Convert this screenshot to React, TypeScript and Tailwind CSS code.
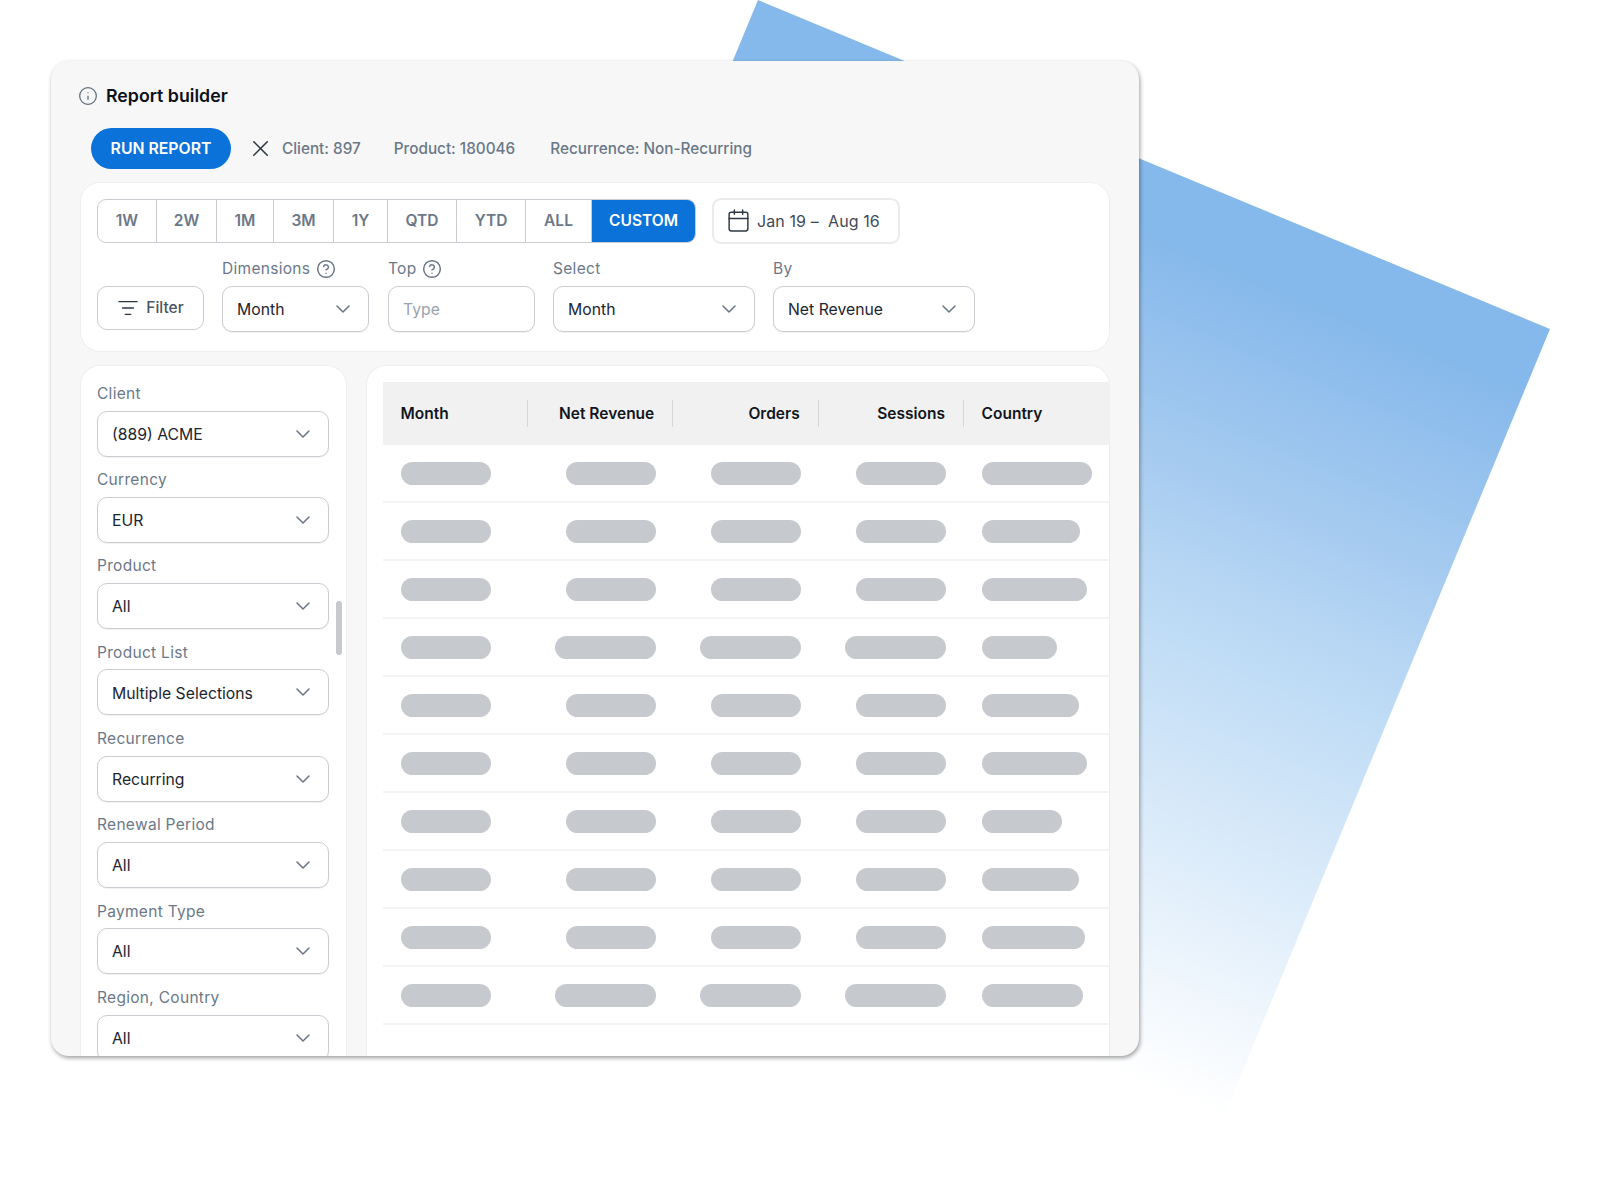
import { Calendar, ChevronDown, CircleHelp, Info, ListFilter, X } from 'lucide-react'

const ranges = [
  { label: '1W', w: 'w-[59px]' },
  { label: '2W', w: 'w-[60px]' },
  { label: '1M', w: 'w-[57px]' },
  { label: '3M', w: 'w-[60px]' },
  { label: '1Y', w: 'w-[54px]' },
  { label: 'QTD', w: 'w-[69px]' },
  { label: 'YTD', w: 'w-[69px]' },
  { label: 'ALL', w: 'w-[66px]' },
]

const fields = [
  { label: 'Client', value: '(889) ACME' },
  { label: 'Currency', value: 'EUR' },
  { label: 'Product', value: 'All' },
  { label: 'Product List', value: 'Multiple Selections' },
  { label: 'Recurrence', value: 'Recurring' },
  { label: 'Renewal Period', value: 'All' },
  { label: 'Payment Type', value: 'All' },
  { label: 'Region, Country', value: 'All' },
]

// widths of the placeholder pills, one row per line: month, revenue, orders, sessions, country
const rows = [
  [90, 90, 90, 90, 110],
  [90, 90, 90, 90, 98],
  [90, 90, 90, 90, 105],
  [90, 101, 101, 101, 75],
  [90, 90, 90, 90, 97],
  [90, 90, 90, 90, 105],
  [90, 90, 90, 90, 80],
  [90, 90, 90, 90, 97],
  [90, 90, 90, 90, 103],
  [90, 101, 101, 101, 101],
]

function SelectBox({ value, className }: { value: string; className: string }) {
  return (
    <div className={`flex items-center justify-between h-[46px] shrink-0 bg-white border border-[#c9ccd1] rounded-[10px] pl-[14px] pr-[13px] shadow-[0_1px_1px_rgba(0,0,0,0.06)] text-[15.75px] text-[#1d2530] ${className}`}>
      <span className="pt-[2px]">{value}</span>
      <ChevronDown size={24} strokeWidth={1.5} className="text-[#667486]" />
    </div>
  )
}

function Label({ text, help }: { text: string; help?: boolean }) {
  return (
    <div className="flex items-center gap-[6px] h-[22px] text-[15.5px] text-[#6b7888] tracking-[0.3px]">
      {text}
      {help && <CircleHelp size={20} strokeWidth={1.75} className="text-[#667486]" />}
    </div>
  )
}

function Pill({ w }: { w: number }) {
  return <div className="h-[23px] rounded-full bg-[#c6c9ce]" style={{ width: w }} />
}

export default function App() {
  return (
    <div className="relative w-[1600px] h-[1200px] overflow-hidden bg-white pl-[51px] pt-[61px] font-['Inter',sans-serif]">
      {/* tilted backdrop behind the card */}
      <svg className="absolute left-0 top-0" width="1600" height="1200" viewBox="0 0 1600 1200">
        <defs>
          <linearGradient id="fade" gradientUnits="userSpaceOnUse" x1="1374" y1="321" x2="1070" y2="1055">
            <stop offset="0" stopColor="#85b8eb" />
            <stop offset="0.26" stopColor="#a6cbf0" />
            <stop offset="0.43" stopColor="#bcdaf5" />
            <stop offset="1" stopColor="#ffffff" />
          </linearGradient>
        </defs>
        <polygon points="758,0 1550,329 1100,1415 320,1056" fill="url(#fade)" />
      </svg>

      <div className="relative flex flex-col w-[1088px] h-[995px] overflow-hidden rounded-[18px] bg-[#f7f7f7] pl-[28.5px] pr-[29px] pt-[23px] shadow-[1px_2px_4px_rgba(0,0,0,0.38)]">
        <div className="flex items-center gap-[8px] h-[24px] -ml-[1.5px]">
          <Info size={20} strokeWidth={1.5} className="text-[#5d6b7d]" />
          <span className="text-[17.75px] font-semibold text-[#0d1117]">Report builder</span>
        </div>

        <div className="flex items-center mt-[20px] ml-[11.5px] h-[41px] text-[15.3px] font-medium text-[#6b7888]">
          <button className="w-[140px] h-[41px] rounded-full bg-[#0a72d8] text-[15.8px] font-semibold text-white">RUN REPORT</button>
          <X size={27} strokeWidth={1.4} className="ml-[16px] text-[#2e3844]" />
          <span className="ml-[8px] pt-[1px]">Client: 897</span>
          <span className="ml-[33px] pt-[1px]">Product: 180046</span>
          <span className="ml-[35px] pt-[1px]">Recurrence: Non-Recurring</span>
        </div>

        {/* range and dimension controls */}
        <div className="mt-[13px] h-[170px] shrink-0 rounded-[20px] border-[1.5px] border-[#eeeeee] bg-white pl-[16.5px] pr-[15px] pt-[14.5px]">
          <div className="flex items-center">
            <div className="flex h-[44px] overflow-hidden rounded-[9px] border border-[#c9ccd1] text-[15.5px] font-semibold text-[#6b7888]">
              {ranges.map((r) => (
                <div key={r.label} className={`flex items-center justify-center pt-[1px] border-r border-[#c9ccd1] ${r.w}`}>
                  {r.label}
                </div>
              ))}
              <div className="flex items-center justify-center pt-[1px] w-[103px] bg-[#0a72d8] text-white">CUSTOM</div>
            </div>
            <div className="flex items-center gap-[6px] ml-[16px] w-[188px] h-[46px] rounded-[9px] border-2 border-[#ebebeb] pl-[12px] text-[16px] tracking-[0.1px] text-[#3f4a58]">
              <Calendar size={25} strokeWidth={1.4} className="text-[#2e3844]" />
              Jan 19 –&nbsp; Aug 16
            </div>
          </div>

          <div className="flex items-end gap-[18px] mt-[14px]">
            <button className="flex items-center justify-center gap-[7px] w-[107px] h-[44px] mb-[2px] pt-[1px] rounded-[10px] border border-[#c9ccd1] text-[15.5px] font-medium text-[#4b5563]">
              <ListFilter size={22} strokeWidth={1.5} className="text-[#2e3844]" />
              Filter
            </button>
            <div className="flex flex-col gap-[6px]">
              <Label text="Dimensions" help />
              <SelectBox value="Month" className="w-[147px]" />
            </div>
            <div className="flex flex-col gap-[6px] ml-[1px]">
              <Label text="Top" help />
              <div className="flex items-center w-[147px] h-[46px] rounded-[10px] border border-[#c9ccd1] pl-[14px] pt-[2px] text-[15.75px] text-[#9aa3af] shadow-[0_1px_1px_rgba(0,0,0,0.06)]">Type</div>
            </div>
            <div className="flex flex-col gap-[6px]">
              <Label text="Select" />
              <SelectBox value="Month" className="w-[202px]" />
            </div>
            <div className="flex flex-col gap-[6px]">
              <Label text="By" />
              <SelectBox value="Net Revenue" className="w-[202px]" />
            </div>
          </div>
        </div>

        <div className="flex gap-[19px] mt-[13px] flex-1 min-h-0">
          {/* filter fields */}
          <div className="relative flex flex-col gap-[12.3px] w-[267px] shrink-0 overflow-hidden rounded-t-[20px] border-[1.5px] border-b-0 border-[#eeeeee] bg-white pl-[16.5px] pt-[16.5px]">
            {fields.map((f) => (
              <div key={f.label} className="flex flex-col gap-[6px]">
                <Label text={f.label} />
                <SelectBox value={f.value} className="w-[232px]" />
              </div>
            ))}
            <div className="absolute left-[255px] top-[235px] w-[6px] h-[54px] rounded-full bg-[#c6c9ce]" />
          </div>

          {/* results table */}
          <div className="flex-1 min-w-0 overflow-hidden rounded-t-[20px] border-[1.5px] border-b-0 border-[#eeeeee] bg-white pl-[16px] pt-[15.5px]">
            <div className="flex items-center h-[63px] bg-[#f1f1f1] text-[15.5px] font-semibold text-[#11161d]">
              <div className="flex items-center justify-between w-[145.4px] pl-[18px]">
                <span className="pt-[2px]">Month</span>
                <span className="w-px h-[27px] bg-[#d5d7da]" />
              </div>
              {['Net Revenue', 'Orders', 'Sessions'].map((h) => (
                <div key={h} className="flex items-center justify-end gap-[18px] w-[145.4px]">
                  <span className="pt-[2px]">{h}</span>
                  <span className="w-px h-[27px] bg-[#d5d7da]" />
                </div>
              ))}
              <div className="pl-[17.5px] pt-[2px]">Country</div>
            </div>
            {rows.map((row, i) => (
              <div key={i} className="flex items-center h-[58px] pt-[2px] border-b-2 border-[#f3f3f3]">
                <div className="w-[145.4px] pl-[18px]">
                  <Pill w={row[0]} />
                </div>
                <div className="flex justify-end w-[145.4px] pr-[17.5px]">
                  <Pill w={row[1]} />
                </div>
                <div className="flex justify-end w-[145.4px] pr-[18px]">
                  <Pill w={row[2]} />
                </div>
                <div className="flex justify-end w-[145.4px] pr-[18px]">
                  <Pill w={row[3]} />
                </div>
                <div className="pl-[17.5px]">
                  <Pill w={row[4]} />
                </div>
              </div>
            ))}
          </div>
        </div>
      </div>
    </div>
  )
}
